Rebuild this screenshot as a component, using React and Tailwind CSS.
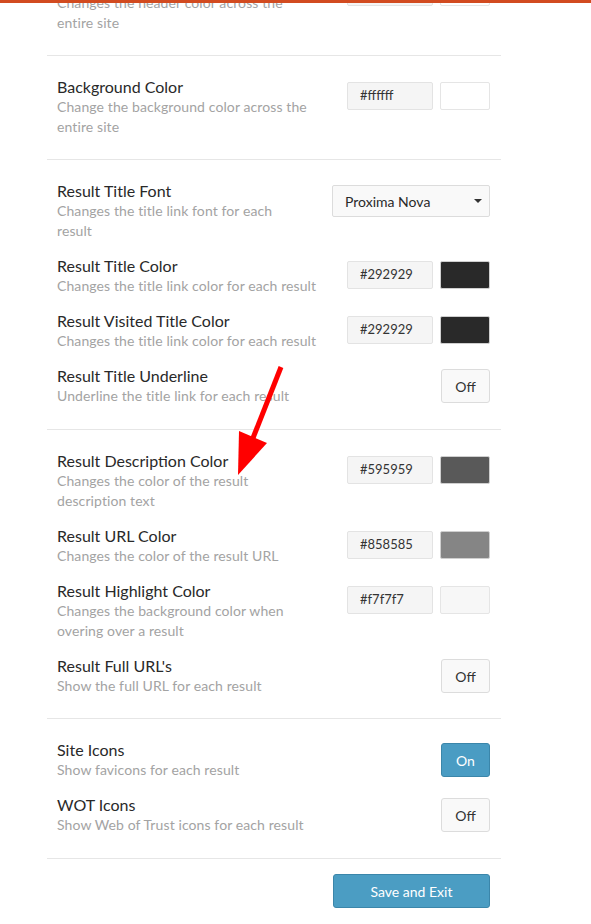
import React from "react";

const font = { fontFamily: "Lato, 'Open Sans', sans-serif" };

function ColorControl({ value, swatch, dark }) {
  return (
    <div className="flex gap-[7px] mt-[5px] shrink-0">
      <div className="w-[86px] h-[28px] bg-[#f5f5f5] border border-[#e3e3e3] rounded-[2px] pl-[12px] flex items-center text-[13px] text-[#333]">
        {value}
      </div>
      <div
        className={
          "w-[50px] h-[28px] border rounded-[2px] " +
          (dark ? "border-[#cfcfcf]" : "border-[#e5e5e5]")
        }
        style={{ backgroundColor: swatch }}
      />
    </div>
  );
}

function Toggle({ on }) {
  return on ? (
    <div className="mt-[3px] w-[49px] h-[34px] rounded-[3px] bg-[#4a9cc3] border border-[#3b86aa] text-white text-[14px] flex items-center justify-center shrink-0">
      On
    </div>
  ) : (
    <div className="mt-[3px] w-[49px] h-[34px] rounded-[3px] bg-[#f9f9f9] border border-[#dcdcdc] text-[#333] text-[14px] flex items-center justify-center shrink-0">
      Off
    </div>
  );
}

function SelectControl() {
  return (
    <div className="mt-[4px] w-[158px] h-[32px] rounded-[2px] bg-[#f9f9f9] border border-[#dcdcdc] flex items-center justify-between pl-[12px] pr-[6px] text-[14px] text-[#292929] shrink-0">
      <span>Proxima Nova</span>
      <svg width="10" height="6" viewBox="0 0 10 6">
        <polygon points="1,1 9,1 5,5" fill="#333" />
      </svg>
    </div>
  );
}

function Row({ title, lines, control }) {
  return (
    <div className="flex justify-between items-start">
      <div className="leading-[20px]">
        <div className="text-[16px] text-[#292929]">{title}</div>
        {lines.map((l, i) => (
          <div key={i} className="text-[14px] tracking-[0.1px] text-[#a3a3a3]">
            {l}
          </div>
        ))}
      </div>
      {control}
    </div>
  );
}

function Section({ children, className = "pb-[22px]" }) {
  return (
    <div
      className={
        "border-b border-[#e6e6e6] pt-[21px] pl-[10px] pr-[11px] flex flex-col gap-[15px] " +
        className
      }
    >
      {children}
    </div>
  );
}

export default function App() {
  return (
    <div className="relative h-[924px] overflow-hidden bg-white" style={font}>
      <div className="absolute top-0 left-0 right-0 h-[3px] bg-[#d24b20] z-10" />
      <div className="ml-[47px] w-[454px] mt-[-48px]">
        <Section>
          <Row
            title="Header Color"
            lines={["Changes the header color across the", "entire site"]}
            control={<ColorControl value="#d24b20" swatch="#ffffff" />}
          />
        </Section>
        <Section>
          <Row
            title="Background Color"
            lines={["Change the background color across the", "entire site"]}
            control={<ColorControl value="#ffffff" swatch="#ffffff" />}
          />
        </Section>
        <Section className="pb-[23px]">
          <Row
            title="Result Title Font"
            lines={["Changes the title link font for each", "result"]}
            control={<SelectControl />}
          />
          <Row
            title="Result Title Color"
            lines={["Changes the title link color for each result"]}
            control={<ColorControl value="#292929" swatch="#292929" dark />}
          />
          <Row
            title="Result Visited Title Color"
            lines={["Changes the title link color for each result"]}
            control={<ColorControl value="#292929" swatch="#292929" dark />}
          />
          <Row
            title="Result Title Underline"
            lines={["Underline the title link for each result"]}
            control={<Toggle />}
          />
        </Section>
        <Section>
          <Row
            title="Result Description Color"
            lines={["Changes the color of the result", "description text"]}
            control={<ColorControl value="#595959" swatch="#595959" dark />}
          />
          <Row
            title="Result URL Color"
            lines={["Changes the color of the result URL"]}
            control={<ColorControl value="#858585" swatch="#858585" dark />}
          />
          <Row
            title="Result Highlight Color"
            lines={["Changes the background color when", "overing over a result"]}
            control={<ColorControl value="#f7f7f7" swatch="#f7f7f7" />}
          />
          <Row
            title="Result Full URL's"
            lines={["Show the full URL for each result"]}
            control={<Toggle />}
          />
        </Section>
        <Section className="pb-[23px]">
          <Row
            title="Site Icons"
            lines={["Show favicons for each result"]}
            control={<Toggle on />}
          />
          <Row
            title="WOT Icons"
            lines={["Show Web of Trust icons for each result"]}
            control={<Toggle />}
          />
        </Section>
        <div className="flex justify-end pr-[11px] pt-[15px]">
          <div className="w-[157px] h-[34px] rounded-[3px] bg-[#4b9dc3] border border-[#3b86aa] text-white text-[14px] flex items-center justify-center">
            Save and Exit
          </div>
        </div>
      </div>
      <svg
        className="absolute left-0 top-0 pointer-events-none"
        width="591"
        height="924"
        viewBox="0 0 591 924"
      >
        <line x1="281" y1="367" x2="253" y2="438" stroke="#ff0000" strokeWidth="5" />
        <polygon points="238,475 239,431 267,443" fill="#ff0000" />
      </svg>
    </div>
  );
}
